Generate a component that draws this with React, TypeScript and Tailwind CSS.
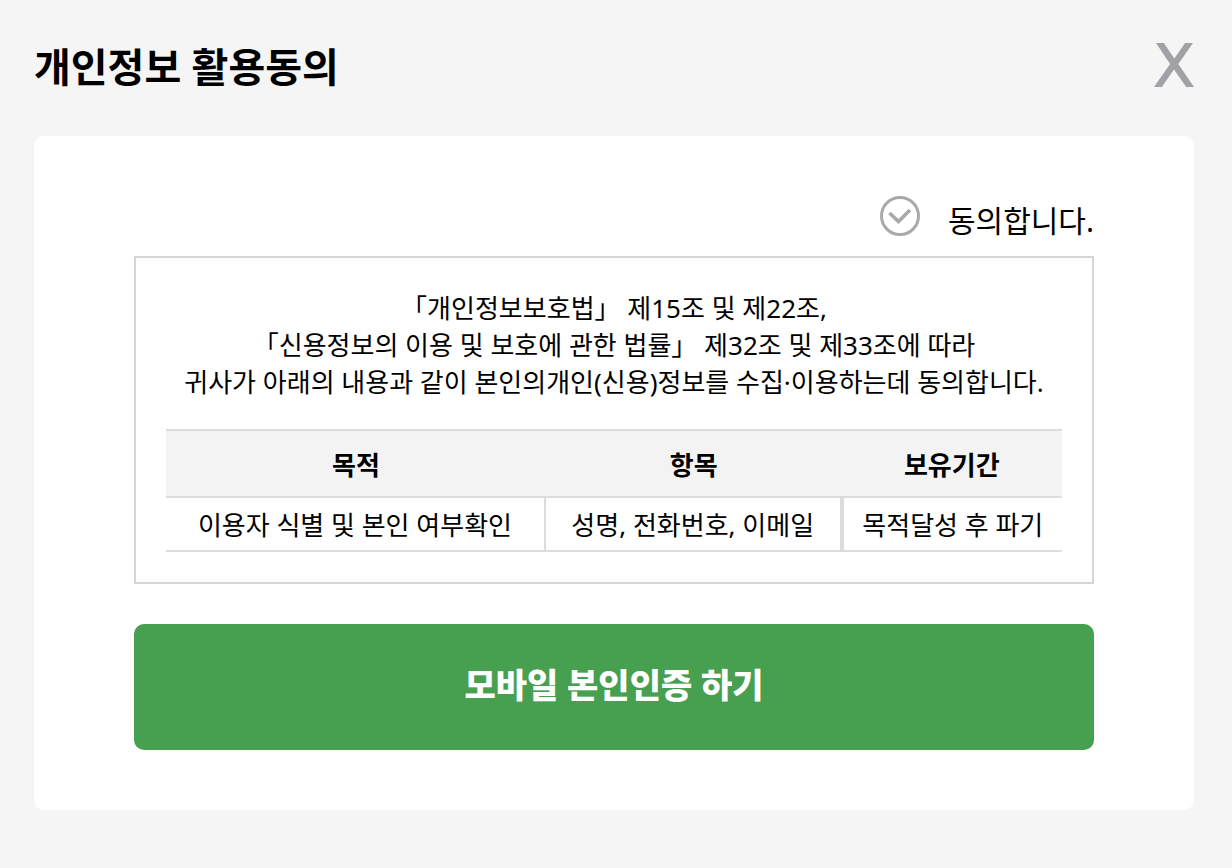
import { useState } from 'react'

const rows = [
  {
    purpose: '이용자 식별 및 본인 여부확인',
    items: '성명, 전화번호, 이메일',
    period: '목적달성 후 파기',
  },
]

function CloseIcon() {
  return (
    <svg width="40" height="44" viewBox="0 0 40 44" fill="#a1a1a6" aria-hidden="true">
      <path d="M2 0H9.8L20.3 15.4L31.1 0H39L24.3 21L40 44H32.2L20 26.6L7.8 44H0L16.1 21Z" />
    </svg>
  )
}

function CheckIcon({ checked }: { checked: boolean }) {
  return (
    <svg
      width="40"
      height="40"
      viewBox="0 0 40 40"
      fill="none"
      stroke={checked ? '#479f50' : '#a9a9ad'}
      strokeWidth="3"
      aria-hidden="true"
    >
      <circle cx="20" cy="20" r="18.5" />
      <path d="M9.5 17L18.5 25.5L30 14" strokeWidth="3.6" />
    </svg>
  )
}

export default function App() {
  const [agreed, setAgreed] = useState(false)

  return (
    <div className="min-h-screen bg-[#f5f5f5] pt-[38px] pr-[38px] pb-[58px] pl-[34px] font-['Noto_Sans','Noto_Sans_CJK_KR',sans-serif] text-black">
      <header className="mb-10 flex items-start justify-between">
        <h1 className="text-[40px] leading-[58px] font-bold">개인정보 활용동의</h1>
        <button type="button" aria-label="닫기" className="pt-[5px]">
          <CloseIcon />
        </button>
      </header>

      <main className="rounded-[10px] bg-white px-[100px] py-[60px]">
        <div className="mb-[10px] flex justify-end">
          <label className="flex cursor-pointer items-start gap-7 text-[30px] leading-[50px]">
            <input
              type="checkbox"
              className="sr-only"
              checked={agreed}
              onChange={(e) => setAgreed(e.target.checked)}
            />
            <CheckIcon checked={agreed} />
            <span>동의합니다.</span>
          </label>
        </div>

        <section className="border-2 border-[#d5d5d5] px-[30px] pt-8 pb-[30px] text-center text-[26px]">
          <p className="leading-[37px]">
            「개인정보보호법」 제15조 및 제22조,
            <br />
            「신용정보의 이용 및 보호에 관한 법률」 제32조 및 제33조에 따라
            <br />
            귀사가 아래의 내용과 같이 본인의개인(신용)정보를 수집·이용하는데 동의합니다.
          </p>

          <table className="mt-7 w-full table-fixed border-separate border-spacing-0 leading-8">
            <thead>
              <tr className="bg-[#f3f3f3]">
                <th className="w-[42.4%] border-y-2 border-[#dcdcdc] pt-[18px] pb-[15px]">목적</th>
                <th className="w-[33%] border-y-2 border-[#dcdcdc] pt-[18px] pb-[15px]">항목</th>
                <th className="border-y-2 border-[#dcdcdc] pt-[18px] pb-[15px]">보유기간</th>
              </tr>
            </thead>
            <tbody>
              {rows.map((row) => (
                <tr key={row.purpose}>
                  <td className="border-r-2 border-b-2 border-[#dcdcdc] pt-[11px] pb-[9px]">{row.purpose}</td>
                  <td className="border-r-2 border-b-2 border-[#dcdcdc] pt-[11px] pb-[9px]">{row.items}</td>
                  <td className="border-b-2 border-l-2 border-[#dcdcdc] pt-[11px] pb-[9px]">{row.period}</td>
                </tr>
              ))}
            </tbody>
          </table>
        </section>

        <button
          type="button"
          className="mt-10 w-full rounded-[10px] bg-[#479f50] pt-9 pb-10 text-[34px] leading-[50px] font-black text-white"
        >
          모바일 본인인증 하기
        </button>
      </main>
    </div>
  )
}
